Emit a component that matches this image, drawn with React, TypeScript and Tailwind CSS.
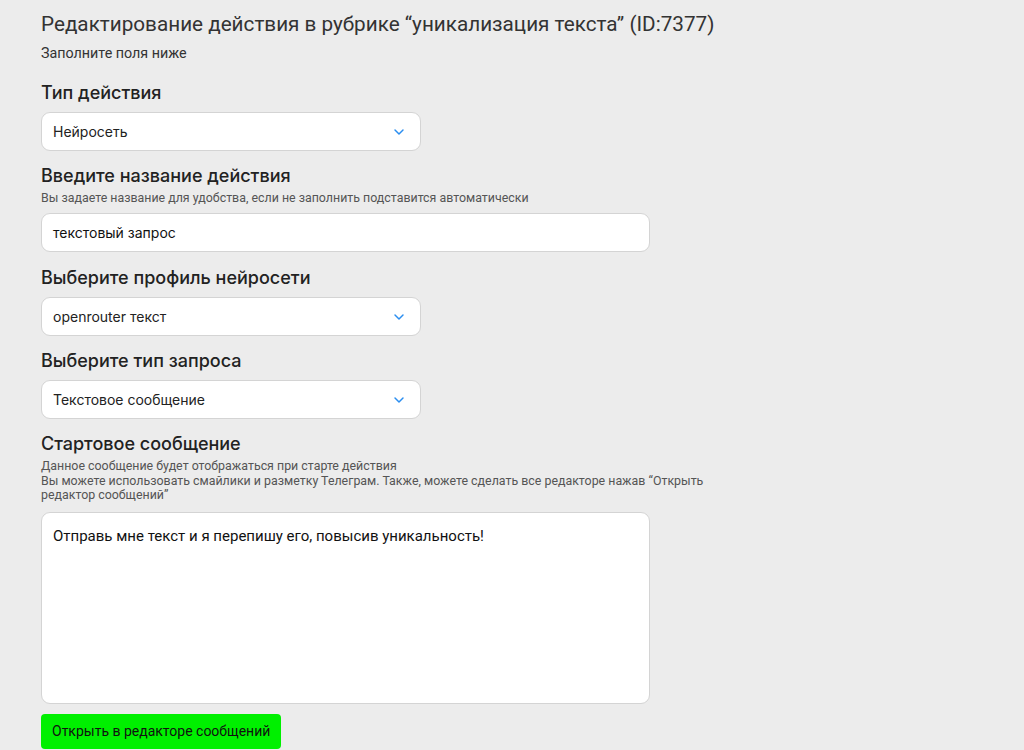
import { ChevronDown } from "lucide-react";

const inter = "font-['Inter','Liberation_Sans',sans-serif]";
const roboto = "font-['Roboto','Liberation_Sans',sans-serif]";

function Label({ children }: { children: React.ReactNode }) {
  return <div className={`${inter} text-[18px] font-medium leading-[24px] text-[#222]`}>{children}</div>;
}

function Select({ value }: { value: string }) {
  return (
    <div className="flex h-[39px] w-[380px] items-center justify-between rounded-[9px] border border-[#d4d4d4] bg-white pl-[11px] pr-[13px]">
      <span className={`${inter} text-[14px] text-[#222]`}>{value}</span>
      <ChevronDown size={16} strokeWidth={2.2} className="text-[#2b8ef0]" />
    </div>
  );
}

export default function App() {
  return (
    <div className="min-h-[750px] w-full bg-[#ececec] pl-[41px] pt-[11px]">
      <h1 className={`${roboto} text-[20.7px] font-normal leading-[26px] text-[#333]`}>
        Редактирование действия в рубрике “уникализация текста” (ID:7377)
      </h1>
      <p className={`${roboto} mt-[8px] text-[14.3px] leading-[17px] text-[#333]`}>Заполните поля ниже</p>

      <div className="mt-[19px]">
        <Label>Тип действия</Label>
        <div className="mt-[7px]">
          <Select value="Нейросеть" />
        </div>
      </div>

      <div className="mt-[13px]">
        <Label>Введите название действия</Label>
        <p className={`${roboto} mt-[2px] text-[12.4px] leading-[15px] text-[#555]`}>
          Вы задаете название для удобства, если не заполнить подставится автоматически
        </p>
        <div className="mt-[8px] flex h-[39px] w-[609px] items-center rounded-[9px] border border-[#d4d4d4] bg-white pl-[11px]">
          <span className={`${inter} text-[14px] text-[#111]`}>текстовый запрос</span>
        </div>
      </div>

      <div className="mt-[14px]">
        <Label>Выберите профиль нейросети</Label>
        <div className="mt-[7px]">
          <Select value="openrouter текст" />
        </div>
      </div>

      <div className="mt-[13px]">
        <Label>Выберите тип запроса</Label>
        <div className="mt-[7px]">
          <Select value="Текстовое сообщение" />
        </div>
      </div>

      <div className="mt-[13px]">
        <Label>Стартовое сообщение</Label>
        <p className={`${roboto} mt-[3px] max-w-[680px] text-[12.4px] leading-[14.5px] text-[#555]`}>
          Данное сообщение будет отображаться при старте действия
          <br />
          Вы можете использовать смайлики и разметку Телеграм. Также, можете сделать все редакторе нажав “Открыть редактор сообщений”
        </p>
        <div className="mt-[9px] h-[192px] w-[609px] rounded-[9px] border border-[#d4d4d4] bg-white px-[11px] pt-[10px]">
          <span className={`${roboto} text-[15px] text-[#111]`}>Отправь мне текст и я перепишу его, повысив уникальность!</span>
        </div>
        <button
          className={`${roboto} mt-[10px] flex h-[35px] items-center rounded-[4px] bg-[#00f000] px-[11px] text-[14px] text-[#111]`}
        >
          Открыть в редакторе сообщений
        </button>
      </div>
    </div>
  );
}
